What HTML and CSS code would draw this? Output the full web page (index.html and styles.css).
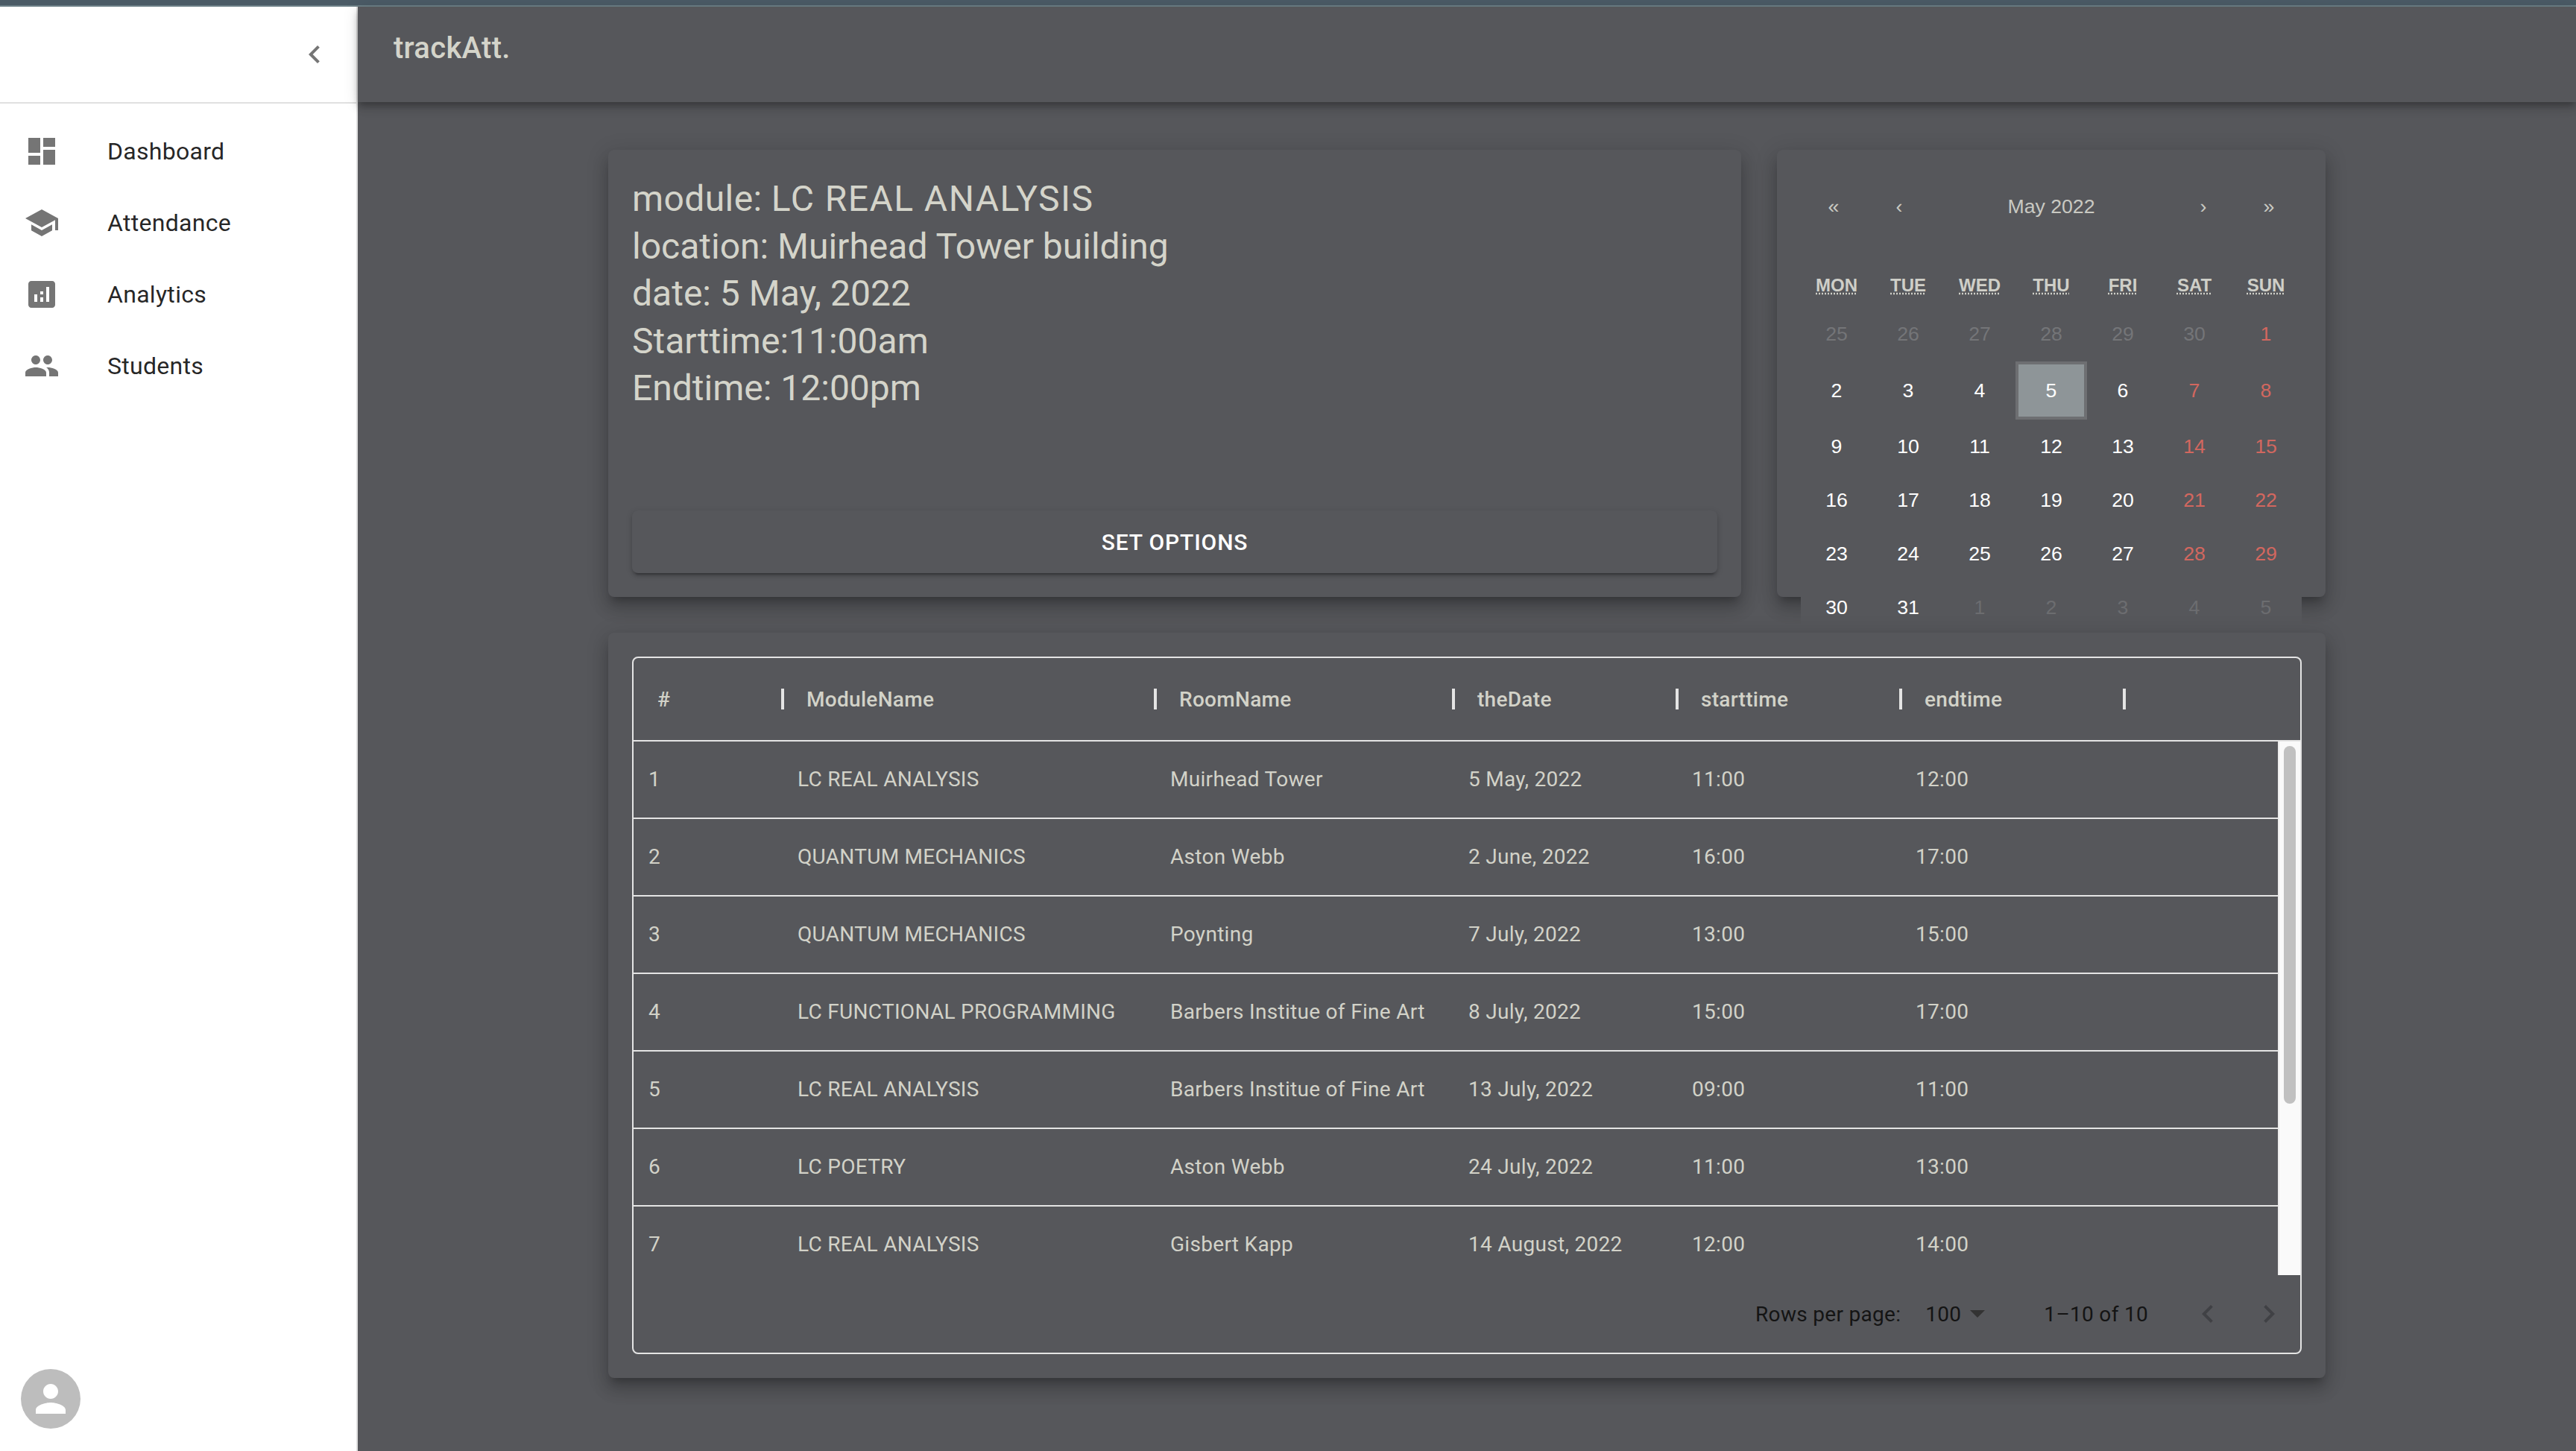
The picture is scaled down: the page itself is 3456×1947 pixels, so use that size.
FILE: index.html
```html
<!DOCTYPE html>
<html lang="en">
<head>
<meta charset="utf-8">
<title>trackAtt.</title>
<link rel="stylesheet" href="styles.css">
</head>
<body>
<div class="topstrip"></div>
<div class="shell">
  <aside class="sidebar">
    <div class="side-head">
      <svg class="icon" viewBox="0 0 24 24"><path d="M15.41 7.41 14 6l-6 6 6 6 1.41-1.41L10.83 12z"/></svg>
    </div>
    <nav class="nav">
      <a class="nav-item"><svg class="icon" viewBox="0 0 24 24"><path d="M3 13h8V3H3v10zm0 8h8v-6H3v6zm10 0h8V11h-8v10zm0-18v6h8V3h-8z"/></svg><span>Dashboard</span></a>
      <a class="nav-item"><svg class="icon" viewBox="0 0 24 24"><path d="M5 13.18v4L12 21l7-3.82v-4L12 17l-7-3.82zM12 3 1 9l11 6 9-4.91V17h2V9L12 3z"/></svg><span>Attendance</span></a>
      <a class="nav-item"><svg class="icon" viewBox="0 0 24 24"><path d="M19 3H5c-1.1 0-2 .9-2 2v14c0 1.1.9 2 2 2h14c1.1 0 2-.9 2-2V5c0-1.1-.9-2-2-2zM9 17H7v-5h2v5zm4 0h-2v-3h2v3zm0-5h-2v-2h2v2zm4 5h-2V7h2v10z"/></svg><span>Analytics</span></a>
      <a class="nav-item"><svg class="icon" viewBox="0 0 24 24"><path d="M16 11c1.66 0 2.99-1.34 2.99-3S17.66 5 16 5c-1.66 0-3 1.34-3 3s1.34 3 3 3zm-8 0c1.66 0 2.99-1.34 2.99-3S9.66 5 8 5C6.34 5 5 6.34 5 8s1.34 3 3 3zm0 2c-2.33 0-7 1.17-7 3.5V19h14v-2.5c0-2.33-4.67-3.5-7-3.5zm8 0c-.29 0-.62.02-.97.05 1.16.84 1.97 1.97 1.97 3.45V19h6v-2.5c0-2.33-4.67-3.5-7-3.5z"/></svg><span>Students</span></a>
    </nav>
    <div class="avatar">
      <svg class="avatar-glyph" viewBox="0 0 24 24"><path d="M12 12c2.21 0 4-1.79 4-4s-1.79-4-4-4-4 1.79-4 4 1.79 4 4 4zm0 2c-2.67 0-8 1.34-8 4v2h16v-2c0-2.66-5.33-4-8-4z"/></svg>
    </div>
  </aside>
  <div class="main">
    <header class="appbar"><h1 class="brand">trackAtt.</h1></header>
    <div class="content">
      <div class="top-row">
        <section class="card info">
          <div class="info-text">
            <div class="info-first">module: <span>LC REAL ANALYSIS</span></div>
            <div>location: Muirhead Tower building</div>
            <div>date: 5 May, 2022</div>
            <div>Starttime:11:00am</div>
            <div>Endtime: 12:00pm</div>
          </div>
          <button class="set-btn">SET OPTIONS</button>
        </section>
        <section class="card cal-card">
          <div class="calendar">
            <div class="cal-nav">
              <span class="cal-btn">«</span><span class="cal-btn">‹</span>
              <span class="cal-label">May 2022</span>
              <span class="cal-btn">›</span><span class="cal-btn">»</span>
            </div>
            <div class="cal-week">
              <abbr>MON</abbr><abbr>TUE</abbr><abbr>WED</abbr><abbr>THU</abbr><abbr>FRI</abbr><abbr>SAT</abbr><abbr>SUN</abbr>
            </div>
            <div class="cal-days">
              <span class="off">25</span><span class="off">26</span><span class="off">27</span><span class="off">28</span><span class="off">29</span><span class="off">30</span><span class="wknd">1</span>
              <span>2</span><span>3</span><span>4</span><span class="today">5</span><span>6</span><span class="wknd">7</span><span class="wknd">8</span>
              <span>9</span><span>10</span><span>11</span><span>12</span><span>13</span><span class="wknd">14</span><span class="wknd">15</span>
              <span>16</span><span>17</span><span>18</span><span>19</span><span>20</span><span class="wknd">21</span><span class="wknd">22</span>
              <span>23</span><span>24</span><span>25</span><span>26</span><span>27</span><span class="wknd">28</span><span class="wknd">29</span>
              <span>30</span><span>31</span><span class="off2">1</span><span class="off2">2</span><span class="off2">3</span><span class="off2">4</span><span class="off2">5</span>
            </div>
          </div>
        </section>
      </div>
      <section class="card table-card">
        <div class="grid">
          <div class="grid-head">
            <div class="hcell"><span>#</span><i class="sep"></i></div>
            <div class="hcell"><span>ModuleName</span><i class="sep"></i></div>
            <div class="hcell"><span>RoomName</span><i class="sep"></i></div>
            <div class="hcell"><span>theDate</span><i class="sep"></i></div>
            <div class="hcell"><span>starttime</span><i class="sep"></i></div>
            <div class="hcell"><span>endtime</span><i class="sep"></i></div>
          </div>
          <div class="grid-body">
            <div class="rows">
              <div class="row"><span>1</span><span>LC REAL ANALYSIS</span><span>Muirhead Tower</span><span>5 May, 2022</span><span>11:00</span><span>12:00</span></div>
              <div class="row"><span>2</span><span>QUANTUM MECHANICS</span><span>Aston Webb</span><span>2 June, 2022</span><span>16:00</span><span>17:00</span></div>
              <div class="row"><span>3</span><span>QUANTUM MECHANICS</span><span>Poynting</span><span>7 July, 2022</span><span>13:00</span><span>15:00</span></div>
              <div class="row"><span>4</span><span>LC FUNCTIONAL PROGRAMMING</span><span>Barbers Institue of Fine Art</span><span>8 July, 2022</span><span>15:00</span><span>17:00</span></div>
              <div class="row"><span>5</span><span>LC REAL ANALYSIS</span><span>Barbers Institue of Fine Art</span><span>13 July, 2022</span><span>09:00</span><span>11:00</span></div>
              <div class="row"><span>6</span><span>LC POETRY</span><span>Aston Webb</span><span>24 July, 2022</span><span>11:00</span><span>13:00</span></div>
              <div class="row"><span>7</span><span>LC REAL ANALYSIS</span><span>Gisbert Kapp</span><span>14 August, 2022</span><span>12:00</span><span>14:00</span></div>
            </div>
            <div class="scrollbar"><div class="thumb"></div></div>
          </div>
          <div class="grid-foot">
            <span>Rows per page:</span>
            <span class="per-page">100</span>
            <svg class="caret" viewBox="0 0 20 10"><path d="M0 0h20L10 10z"/></svg>
            <span class="range">1–10 of 10</span>
            <span class="pager"><svg class="icon" viewBox="0 0 24 24"><path d="M15.41 7.41 14 6l-6 6 6 6 1.41-1.41L10.83 12z"/></svg></span>
            <span class="pager"><svg class="icon" viewBox="0 0 24 24"><path d="M10 6 8.59 7.41 13.17 12l-4.58 4.59L10 18l6-6z"/></svg></span>
          </div>
        </div>
      </section>
    </div>
  </div>
</div>
</body>
</html>
```
FILE: styles.css
```css
* { box-sizing: border-box; }
html, body { margin: 0; padding: 0; }
body {
  width: 3456px;
  height: 1947px;
  overflow: hidden;
  background: #56575b;
  font-family: Roboto, sans-serif;
  display: flex;
  flex-direction: column;
}
.topstrip {
  height: 9px;
  flex: none;
  background: #4b5b66;
  border-bottom: 2px solid #6d8087;
}
.shell { flex: 1; display: flex; min-height: 0; }
.icon { width: 48px; height: 48px; fill: #757575; flex: none; display: block; }

.sidebar {
  width: 480px;
  flex: none;
  background: #fff;
  border-right: 2px solid #e0e0e0;
  display: flex;
  flex-direction: column;
}
.side-head {
  height: 130px;
  flex: none;
  border-bottom: 2px solid #e0e0e0;
  display: flex;
  align-items: center;
  justify-content: flex-end;
  padding-right: 32px;
}
.nav { padding-top: 16px; display: flex; flex-direction: column; }
.nav-item {
  height: 96px;
  display: flex;
  align-items: center;
  padding-left: 32px;
  gap: 64px;
  font-size: 32px;
  letter-spacing: .3px;
  color: rgba(0, 0, 0, .87);
}
.avatar {
  margin: auto 0 30px 28px;
  width: 80px;
  height: 80px;
  border-radius: 50%;
  background: #bdbdbd;
  display: flex;
  align-items: center;
  justify-content: center;
}
.avatar-glyph { width: 60px; height: 60px; fill: #fff; }

.main { flex: 1; min-width: 0; display: flex; flex-direction: column; }
.appbar {
  height: 128px;
  flex: none;
  background: #56575b;
  padding: 26px 48px 0;
  position: relative;
  z-index: 3;
  box-shadow: 0 4px 8px -2px rgba(0,0,0,.2), 0 8px 10px 0 rgba(0,0,0,.14), 0 2px 20px 0 rgba(0,0,0,.12);
}
.brand {
  margin: 0;
  font-size: 40px;
  line-height: 60px;
  font-weight: 500;
  letter-spacing: .3px;
  color: #d4d4ca;
}
.content {
  width: 2304px;
  margin: 64px auto 0;
  display: flex;
  flex-direction: column;
  gap: 48px;
}
.top-row {
  display: grid;
  grid-template-columns: 1520px 736px;
  grid-template-rows: 600px;
  gap: 48px;
}
.card {
  background: #56575b;
  border-radius: 8px;
  padding: 32px;
  box-shadow: 0 10px 10px -6px rgba(0,0,0,.2), 0 16px 20px 2px rgba(0,0,0,.14), 0 6px 28px 4px rgba(0,0,0,.12);
}
.info { display: flex; flex-direction: column; }
.info-text {
  font-size: 48px;
  line-height: 63.6px;
  color: #d4d4ca;
  padding-top: 2px;
}
.info-first { letter-spacing: .4px; }
.info-first span { letter-spacing: 1.45px; }
.set-btn {
  margin-top: auto;
  height: 84px;
  flex: none;
  border: 0;
  border-radius: 8px;
  background: #56575b;
  color: #fff;
  font: 500 30px Roboto, sans-serif;
  letter-spacing: .86px;
  box-shadow: 0 6px 2px -4px rgba(0,0,0,.2), 0 4px 4px 0 rgba(0,0,0,.14), 0 2px 10px 0 rgba(0,0,0,.12);
}

.calendar {
  width: 672px;
  height: 618px;
  background: #56575b;
  font-family: "Liberation Sans", Arial, sans-serif;
  font-size: 26.67px;
}
.cal-nav {
  height: 88px;
  display: grid;
  grid-template-columns: 88px 88px 1fr 88px 88px;
  align-items: center;
  justify-items: center;
  color: #c9c9c2;
  margin-bottom: 38px;
}
.cal-week {
  height: 52px;
  display: grid;
  grid-template-columns: repeat(7, 96px);
  align-items: center;
  justify-items: center;
  font-size: 24px;
  font-weight: 700;
  color: #cfcfc8;
  padding-bottom: 4px;
}
.cal-week abbr { text-decoration: underline dotted; }
.cal-days {
  display: grid;
  grid-template-columns: repeat(7, 96px);
  grid-template-rows: 74px 78px repeat(4, 72px);
  color: #fff;
}
.cal-days span { display: flex; align-items: center; justify-content: center; }
.cal-days .off { color: #747578; }
.cal-days .off2 { color: #6c6d70; }
.cal-days .wknd { color: #d2675f; }
.cal-days .today { background: #8e9598; border: 4px solid #6e6f72; }

.table-card { position: relative; z-index: 1; height: 1000px; }
.grid {
  height: 936px;
  border: 2px solid #e4e4e4;
  border-radius: 8px;
  display: flex;
  flex-direction: column;
  color: #d2d2c8;
  font-size: 28px;
  letter-spacing: .3px;
  overflow: hidden;
}
.grid-head {
  height: 112px;
  flex: none;
  border-bottom: 2px solid #e4e4e4;
  display: grid;
  grid-template-columns: 200px 500px 400px 300px 300px 300px;
  align-items: center;
  font-weight: 500;
}
.hcell { display: flex; justify-content: space-between; align-items: center; padding-left: 32px; }
.sep { width: 4px; height: 28px; background: #e4e4e4; margin-right: -2px; }
.grid-body { height: 716px; flex: none; display: flex; overflow: hidden; }
.rows { flex: 1; min-width: 0; }
.row {
  height: 104px;
  border-bottom: 2px solid #e4e4e4;
  padding-bottom: 2px;
  display: grid;
  grid-template-columns: 200px 500px 400px 300px 300px 300px;
  align-items: center;
}
.row span { padding-left: 20px; }
.scrollbar {
  width: 30px;
  flex: none;
  background: #fafafa;
  border-left: 2px solid #ececec;
  padding: 6px 6px 0;
}
.thumb { width: 16px; height: 480px; background: #c1c1c1; border-radius: 8px; }
.grid-foot {
  flex: 1;
  display: flex;
  align-items: center;
  justify-content: flex-end;
  padding-right: 2px;
  color: #141414;
}
.per-page { margin-left: 33px; }
.caret { width: 20px; height: 10px; fill: #333; margin-left: 12px; }
.range { margin-left: 79px; margin-right: 40px; }
.pager { width: 80px; height: 80px; display: flex; align-items: center; justify-content: center; }
.pager + .pager { margin-left: 2px; }
.pager .icon { fill: #404145; }
```
